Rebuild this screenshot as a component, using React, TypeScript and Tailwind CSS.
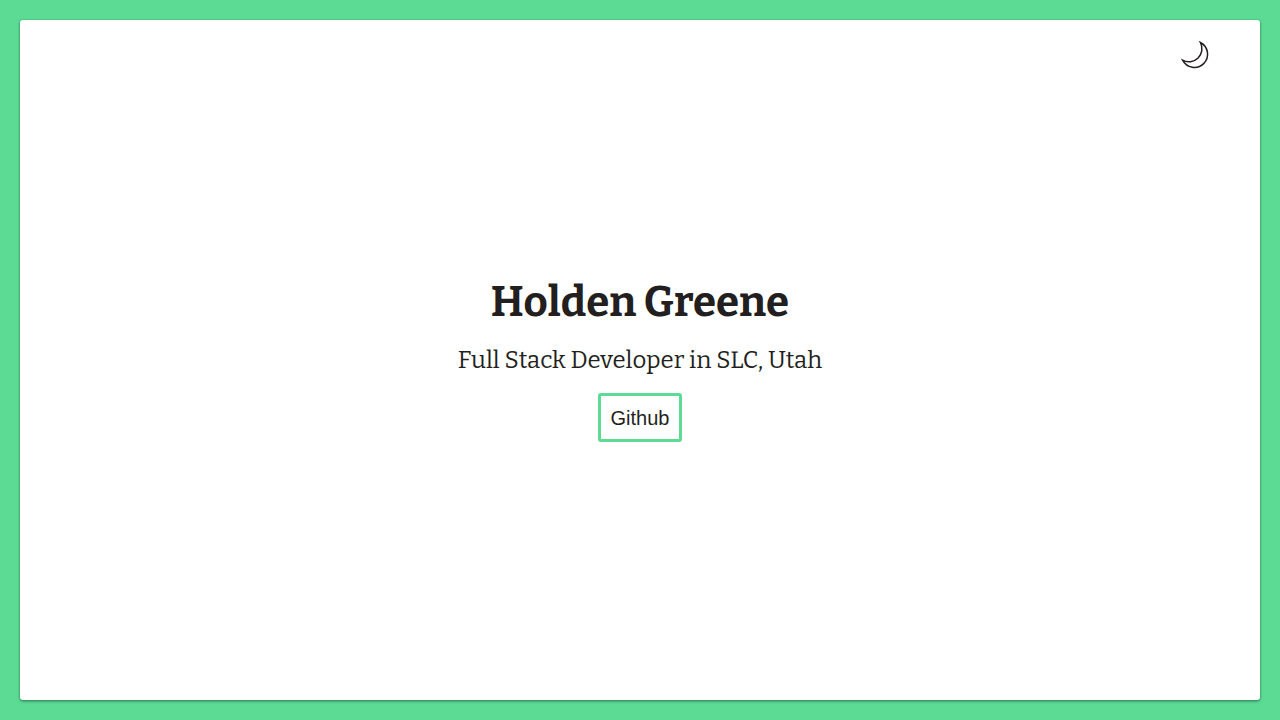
import { useState } from "react";

function MoonIcon() {
  return (
    <svg viewBox="0 0 30 30" className="size-[30px]" fill="none" stroke="currentColor" strokeWidth="1.5" strokeLinejoin="miter" aria-hidden="true">
      <path d="M20.4 2.5A13.2 13.2 0 1 1 2.6 20.2A13.1 13.1 0 0 0 20.4 2.5Z" />
    </svg>
  );
}

export default function App() {
  const [dark, setDark] = useState(false);
  const panel = dark ? "bg-[#231f20] text-white" : "bg-white text-[#231f20]";
  return (
    <div className="grid min-h-screen bg-[#5cdb95] p-5">
      <main
        className={`grid grid-rows-[1fr_auto_1fr] rounded-[3px] px-[50px] py-5 shadow-[0_1px_3px_rgba(0,0,0,0.3),0_1px_3px_rgba(0,0,0,0.24)] ${panel}`}
      >
        <header className="flex items-start justify-end">
          <button type="button" aria-label="Toggle dark mode" onClick={() => setDark(!dark)} className="cursor-pointer">
            <MoonIcon />
          </button>
        </header>
        <section className="flex flex-col items-center gap-[19px] text-center font-[Bitter,'DejaVu_Serif_Condensed','DejaVu_Serif',serif]">
          <h1 className="text-[42px] leading-[49px] font-bold">Holden Greene</h1>
          <p className="text-2xl leading-7">Full Stack Developer in SLC, Utah</p>
          <a
            href="https://github.com"
            className="rounded-[3px] border-3 border-[#5cdb95] px-2.5 pt-2.5 pb-[9px] font-['Liberation_Sans',Arial,sans-serif] text-xl leading-6"
          >
            Github
          </a>
        </section>
      </main>
    </div>
  );
}
